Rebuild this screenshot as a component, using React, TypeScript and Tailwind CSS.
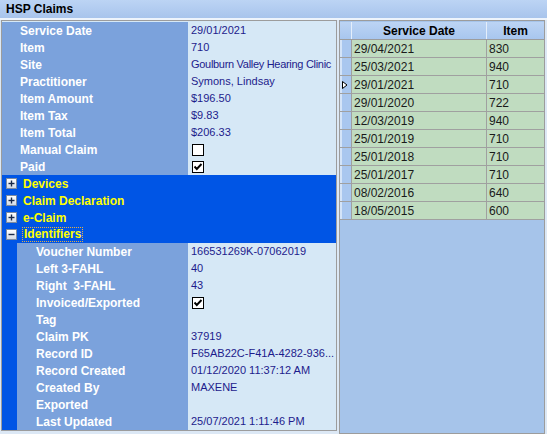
import React from "react";

type Prop = { label: string; value?: string; check?: boolean; tight?: boolean };

const topRows: Prop[] = [
  { label: "Service Date", value: "29/01/2021" },
  { label: "Item", value: "710" },
  { label: "Site", value: "Goulburn Valley Hearing Clinic", tight: true },
  { label: "Practitioner", value: "Symons, Lindsay" },
  { label: "Item Amount", value: "$196.50" },
  { label: "Item Tax", value: "$9.83" },
  { label: "Item Total", value: "$206.33" },
  { label: "Manual Claim", check: false },
  { label: "Paid", check: true },
];

const idRows: Prop[] = [
  { label: "Voucher Number", value: "166531269K-07062019" },
  { label: "Left 3-FAHL", value: "40" },
  { label: "Right  3-FAHL", value: "43" },
  { label: "Invoiced/Exported", check: true },
  { label: "Tag", value: "" },
  { label: "Claim PK", value: "37919" },
  { label: "Record ID", value: "F65AB22C-F41A-4282-936..." },
  { label: "Record Created", value: "01/12/2020 11:37:12 AM" },
  { label: "Created By", value: "MAXENE" },
  { label: "Exported", value: "" },
  { label: "Last Updated", value: "25/07/2021 1:11:46 PM" },
];

const claims = [
  ["29/04/2021", "830"],
  ["25/03/2021", "940"],
  ["29/01/2021", "710"],
  ["29/01/2020", "722"],
  ["12/03/2019", "940"],
  ["25/01/2019", "710"],
  ["25/01/2018", "710"],
  ["25/01/2017", "710"],
  ["08/02/2016", "640"],
  ["18/05/2015", "600"],
];

function CheckBox({ checked }: { checked: boolean }) {
  return (
    <div className="ml-[1px] flex h-[12px] w-[12px] items-center justify-center border border-black bg-white">
      {checked && (
        <svg width="10" height="10" viewBox="0 0 10 10">
          <path d="M1.5 4.5 L3.8 7 L8.5 2" fill="none" stroke="black" strokeWidth="1.9" />
        </svg>
      )}
    </div>
  );
}

function PropRow({ row, nested }: { row: Prop; nested?: boolean }) {
  return (
    <div className="flex h-[17px]">
      {nested && <div className="w-[15px] shrink-0 bg-[#0055e5]" />}
      <div
        className={`flex shrink-0 items-center bg-[#7ba2dc] text-[12px] font-bold text-white ${
          nested ? "w-[171px] pl-[19px]" : "w-[186px] pl-[18px]"
        }`}
      >
        <span className="whitespace-pre">{row.label}</span>
      </div>
      <div
        className={`flex flex-1 items-center overflow-hidden whitespace-nowrap bg-[#d6e8f6] pl-[3px] text-[11px] text-[#1d1b8c] ${
          row.tight ? "tracking-[-0.3px]" : ""
        }`}
      >
        {row.check !== undefined ? <CheckBox checked={row.check} /> : row.value}
      </div>
    </div>
  );
}

function Category({ label, open, focus }: { label: string; open?: boolean; focus?: boolean }) {
  return (
    <div className="flex h-[17px] items-center bg-[#0055e5]">
      <div className="ml-[4px] flex h-[11px] w-[11px] items-center justify-center border border-[#7d8ba0] bg-gradient-to-b from-white to-[#d4dbe6]">
        <svg width="9" height="9" viewBox="0 0 9 9">
          <path d="M1.5 4.5 H7.5" stroke="#1a2a4a" strokeWidth="1.4" />
          {!open && <path d="M4.5 1.5 V7.5" stroke="#1a2a4a" strokeWidth="1.4" />}
        </svg>
      </div>
      <span
        className={`ml-[5px] text-[12px] font-bold text-[#ffff00] ${
          focus ? "border border-dotted border-[#e8b040] px-[1px] leading-[13px]" : "px-[1px]"
        }`}
      >
        {label}
      </span>
    </div>
  );
}

export default function App() {
  return (
    <div className="flex h-[434px] w-[547px] flex-col overflow-hidden bg-[#dce8f5] font-['Liberation_Sans',Arial,sans-serif]">
      <div className="flex h-[18px] shrink-0 items-center bg-gradient-to-b from-[#bcd4f4] to-[#a8c4ec] pl-[6px] text-[12px] font-bold text-black">
        HSP Claims
      </div>
      <div className="h-[2px] shrink-0 bg-[#eef4fc]" />
      <div className="flex flex-1 items-start">
        <div className="ml-[1px] w-[336px] border border-[#9c9c9c] bg-[#d6e8f6] pt-[1px]">
          {topRows.map((r) => (
            <PropRow key={r.label} row={r} />
          ))}
          <Category label="Devices" />
          <Category label="Claim Declaration" />
          <Category label="e-Claim" />
          <Category label="Identifiers" open focus />
          {idRows.map((r) => (
            <PropRow key={r.label} row={r} nested />
          ))}
        </div>
        <div className="ml-[2px] flex h-[414px] w-[206px] flex-col border border-[#9c9c9c] bg-[#a6c4ea] pt-[1px]">
          <div className="flex h-[18px] border-b border-[#9c9c9c] bg-gradient-to-b from-[#bcd4f4] to-[#a8c6ee] text-[12px] font-bold text-black">
            <div className="w-[12px] border-r border-[#e4eefb]" />
            <div className="flex w-[135px] items-center justify-center border-r border-[#e4eefb]">Service Date</div>
            <div className="flex flex-1 items-center justify-center">Item</div>
          </div>
          {claims.map(([d, i], idx) => (
            <div key={d} className="flex h-[18px] border-b border-[#a0a0a0] text-[12px] text-[#1a1a1a]">
              <div className="flex w-[12px] items-center border-r border-l-2 border-[#a0a0a0] border-l-[#d4e4f8] bg-[#a9c7ef]">
                {idx === 2 && (
                  <svg width="6" height="8" viewBox="0 0 6 8">
                    <path d="M0.5 0.5 L5 4 L0.5 7.5 Z" fill="white" stroke="black" strokeWidth="1" />
                  </svg>
                )}
              </div>
              <div className="flex w-[135px] items-center border-r border-[#a0a0a0] bg-[#c0dcc0] pl-[2px]">{d}</div>
              <div className="flex flex-1 items-center bg-[#c0dcc0] pl-[2px]">{i}</div>
            </div>
          ))}
        </div>
      </div>
    </div>
  );
}
